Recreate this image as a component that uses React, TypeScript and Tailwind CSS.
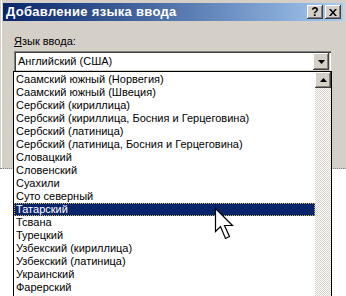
const items = [
  'Саамский южный (Норвегия)',
  'Саамский южный (Швеция)',
  'Сербский (кириллица)',
  'Сербский (кириллица, Босния и Герцеговина)',
  'Сербский (латиница)',
  'Сербский (латиница, Босния и Герцеговина)',
  'Словацкий',
  'Словенский',
  'Суахили',
  'Суто северный',
  'Татарский',
  'Тсвана',
  'Турецкий',
  'Узбекский (кириллица)',
  'Узбекский (латиница)',
  'Украинский',
  'Фарерский',
]

const raised =
  'shadow-[inset_-1px_-1px_#404040,inset_1px_1px_#ffffff,inset_-2px_-2px_#808080,inset_2px_2px_#d4d0c8]'

function Arrow({ up }: { up?: boolean }) {
  return (
    <svg width="7" height="4" viewBox="0 0 7 4" className={up ? 'rotate-180' : ''}>
      <path d="M0 0h7L3.5 4z" fill="#000" />
    </svg>
  )
}

export default function App() {
  return (
    <div className="relative w-[346px] h-[296px] overflow-hidden bg-white font-['Liberation_Sans',Arial,sans-serif] text-[11px] text-black">
      {/* dialog window */}
      <div className="w-[346px] h-[169px] bg-[#d4d0c8] p-[3px] border-b border-dotted border-[#808080] shadow-[inset_1px_0_#d4d0c8,inset_2px_0_#ffffff]">
        <div className="h-[18px] flex items-center pl-[3px] pr-[2px] bg-gradient-to-r from-[#0a246a] to-[#a6caf0]">
          <span className="font-bold text-white text-[13px] tracking-[0.3px]">Добавление языка ввода</span>
          <div className="ml-auto flex gap-[2px]">
            <div className={`w-[16px] h-[14px] bg-[#d4d0c8] ${raised} flex items-center justify-center font-bold text-[12px] leading-none`}>
              ?
            </div>
            <div className={`w-[16px] h-[14px] bg-[#d4d0c8] ${raised} flex items-center justify-center`}>
              <svg width="8" height="7" viewBox="0 0 8 7">
                <path d="M0 0h2l2 2.5L6 0h2L5 3.5 8 7H6L4 4.5 2 7H0l3-3.5z" fill="#000" />
              </svg>
            </div>
          </div>
        </div>
        <div className="pl-[11px] pr-[12px] pt-[14px]">
          <div className="leading-[13px]">
            <span className="underline">Я</span>зык ввода:
          </div>
          <div className="mt-[3px] h-[21px] bg-white flex items-center shadow-[inset_1px_1px_#808080,inset_2px_2px_#404040,inset_-1px_-1px_#ffffff,inset_-2px_-2px_#d4d0c8] pl-[4px] pr-[2px]">
            <span>Английский (США)</span>
            <div className={`ml-auto w-[16px] h-[17px] bg-[#d4d0c8] ${raised} flex items-center justify-center`}>
              <Arrow />
            </div>
          </div>
        </div>
      </div>

      {/* dropped list */}
      <div className="absolute left-[13px] top-[71px] w-[319px] h-[240px] border border-black bg-white flex">
        <div className="flex-1 pt-[1px]">
          {items.map((t) => (
            <div
              key={t}
              className={`h-[13px] leading-[13px] pl-[2px] whitespace-nowrap ${
                t === 'Татарский' ? 'bg-[#0a246a] text-white outline outline-1 outline-dotted outline-[#c9b35a] -outline-offset-1' : ''
              }`}
            >
              {t}
            </div>
          ))}
        </div>
        <div className="w-[16px] bg-[repeating-conic-gradient(#d4d0c8_0%_25%,#ffffff_0%_50%)] bg-[length:2px_2px]">
          <div className={`h-[16px] bg-[#d4d0c8] ${raised} flex items-center justify-center`}>
            <Arrow up />
          </div>
        </div>
      </div>

      {/* mouse pointer */}
      <svg className="absolute left-[214px] top-[207px]" width="20" height="34" viewBox="0 0 20 34">
        <path
          d="M1.5 1.5V24.5L6.5 19.5L11.5 31.5L15.5 29.5L10.5 18.5H18.5Z"
          fill="#fff"
          stroke="#000"
          strokeWidth="1.2"
          strokeLinejoin="miter"
        />
      </svg>
    </div>
  )
}
